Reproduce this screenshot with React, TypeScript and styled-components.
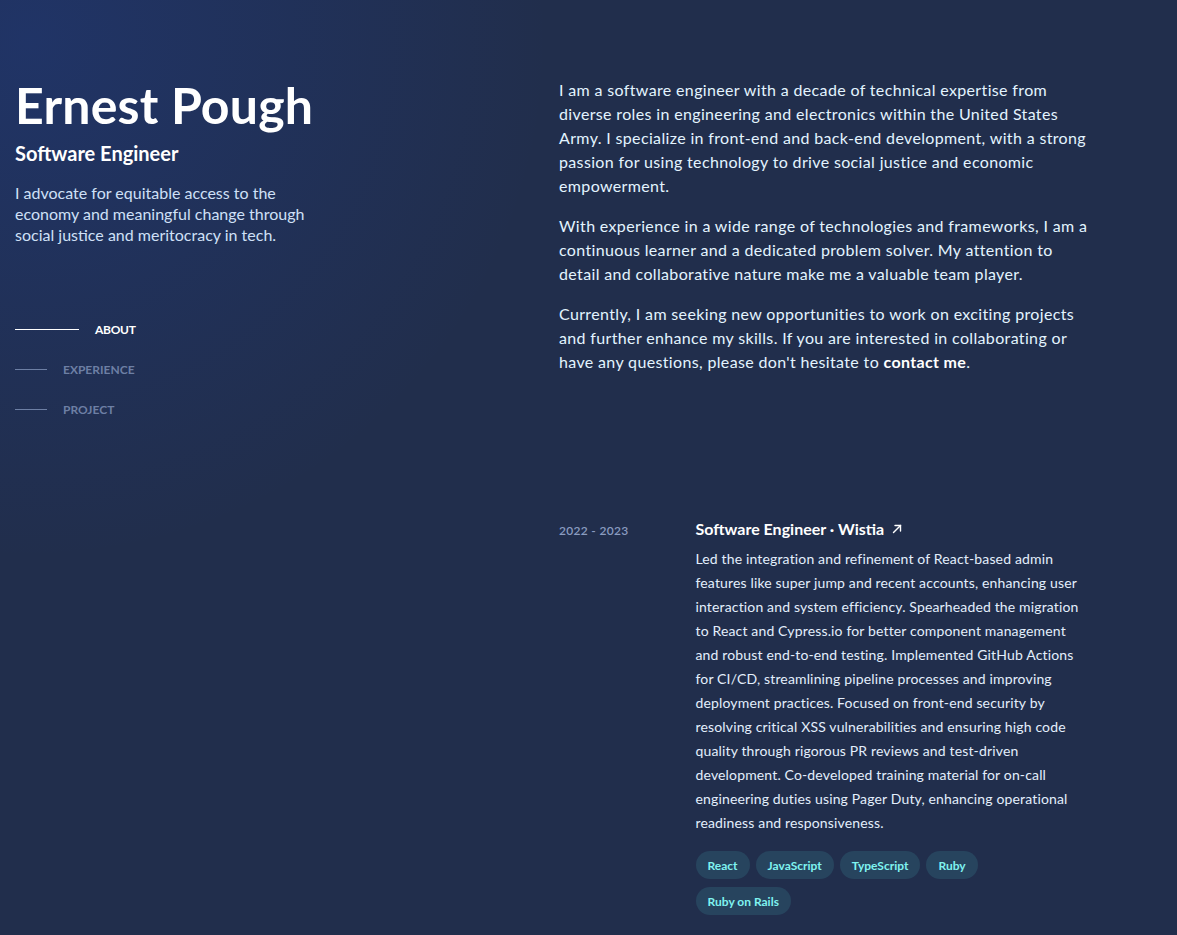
import React from "react";
import styled, { createGlobalStyle } from "styled-components";

const Global = createGlobalStyle`
  html, body { margin: 0; padding: 0; }
  body {
    background: #212e4c;
    font-family: "Lato", "Noto Sans", sans-serif;
    -webkit-font-smoothing: antialiased;
  }
`;

const Page = styled.div`
  min-height: 935px;
  background: radial-gradient(650px at 30px 40px, rgba(29, 78, 216, 0.19), transparent 80%), #212e4c;
  overflow: hidden;
`;

const Layout = styled.div`
  display: flex;
  padding-left: 15px;
`;

const Header = styled.header`
  width: 544px;
  flex-shrink: 0;
  padding-top: 76px;
`;

const Name = styled.h1`
  margin: 0;
  font-size: 50px;
  line-height: 58px;
  font-weight: 700;
  color: #ffffff;
  letter-spacing: 0.2px;
`;

const Role = styled.h2`
  margin: 5px 0 0;
  font-size: 20px;
  line-height: 28px;
  font-weight: 700;
  color: #ffffff;
`;

const Intro = styled.p`
  margin: 15px 0 0;
  width: 310px;
  font-size: 16px;
  line-height: 21px;
  color: #cfe0f7;
`;

const Nav = styled.nav`
  margin-top: 76px;
  display: flex;
  flex-direction: column;
  gap: 24px;
`;

const NavItem = styled.a<{ $active?: boolean }>`
  display: flex;
  align-items: center;
  gap: 16px;
  height: 16px;
  text-decoration: none;
  font-size: 12px;
  font-weight: 700;
  letter-spacing: ${(p) => (p.$active ? "-0.3px" : "0")};
  text-transform: uppercase;
  color: ${(p) => (p.$active ? "#ffffff" : "#6d7fa4")};
`;

const NavLine = styled.span<{ $active?: boolean }>`
  display: block;
  height: 1px;
  width: ${(p) => (p.$active ? "64px" : "32px")};
  background: ${(p) => (p.$active ? "#ffffff" : "#6d7fa4")};
`;

const Main = styled.main`
  width: 530px;
  flex-shrink: 0;
  padding-top: 78px;
`;

const About = styled.section`
  width: 538px;
  display: flex;
  flex-direction: column;
  gap: 16px;
`;

const Para = styled.p`
  margin: 0;
  font-size: 16px;
  line-height: 24px;
  letter-spacing: 0.35px;
  color: #e3f4ff;
`;

const Contact = styled.a`
  color: #ffffff;
  font-weight: 700;
  text-decoration: none;
`;

const Experience = styled.section`
  margin-top: 145px;
`;

const Job = styled.article`
  display: grid;
  grid-template-columns: repeat(8, 1fr);
  column-gap: 16px;
`;

const Dates = styled.div`
  grid-column: span 2;
  font-size: 12px;
  line-height: 16px;
  font-weight: 600;
  letter-spacing: 0.3px;
  color: #8a9cc0;
  margin-top: 4px;
`;

const JobBody = styled.div`
  grid-column: span 6;
`;

const JobTitle = styled.h3`
  margin: 0;
  display: flex;
  align-items: center;
  gap: 7px;
  font-size: 16px;
  line-height: 20px;
  font-weight: 700;
  color: #ffffff;
`;

const JobText = styled.p`
  margin: 8px 0 0;
  font-size: 14px;
  line-height: 24px;
  letter-spacing: 0.15px;
  color: #e3eefc;
`;

const Tags = styled.ul`
  list-style: none;
  margin: 16px 0 0;
  padding: 0;
  display: flex;
  flex-wrap: wrap;
  column-gap: 6px;
  row-gap: 8px;
  width: 300px;
`;

const Tag = styled.li`
  display: flex;
  align-items: center;
  height: 28px;
  padding: 0 12px;
  border-radius: 999px;
  background: #27445e;
  color: #7ff3f0;
  font-size: 12px;
  font-weight: 700;
`;

const Arrow = () => (
  <svg width="12" height="12" viewBox="0 0 12 12" fill="none" stroke="#ffffff" strokeWidth="1.4" strokeLinecap="round">
    <path d="M2.5 9.5L9.5 2.5" />
    <path d="M4 2.5H9.5V8" />
  </svg>
);

export default function App() {
  const tags = ["React", "JavaScript", "TypeScript", "Ruby", "Ruby on Rails"];
  return (
    <Page>
      <Global />
      <Layout>
        <Header>
          <Name>Ernest Pough</Name>
          <Role>Software Engineer</Role>
          <Intro>
            I advocate for equitable access to the economy and meaningful change through social justice and meritocracy in tech.
          </Intro>
          <Nav>
            <NavItem $active>
              <NavLine $active />
              About
            </NavItem>
            <NavItem>
              <NavLine />
              Experience
            </NavItem>
            <NavItem>
              <NavLine />
              Project
            </NavItem>
          </Nav>
        </Header>
        <Main>
          <About>
            <Para>
              I am a software engineer with a decade of technical expertise from diverse roles in engineering and electronics within the United States Army. I specialize in front-end and back-end development, with a strong passion for using technology to drive social justice and economic empowerment.
            </Para>
            <Para>
              With experience in a wide range of technologies and frameworks, I am a continuous learner and a dedicated problem solver. My attention to detail and collaborative nature make me a valuable team player.
            </Para>
            <Para>
              Currently, I am seeking new opportunities to work on exciting projects and further enhance my skills. If you are interested in collaborating or have any questions, please don't hesitate to <Contact>contact me</Contact>.
            </Para>
          </About>
          <Experience>
            <Job>
              <Dates>2022 - 2023</Dates>
              <JobBody>
                <JobTitle>
                  Software Engineer · Wistia <Arrow />
                </JobTitle>
                <JobText>
                  Led the integration and refinement of React-based admin features like super jump and recent accounts, enhancing user interaction and system efficiency. Spearheaded the migration to React and Cypress.io for better component management and robust end-to-end testing. Implemented GitHub Actions for CI/CD, streamlining pipeline processes and improving deployment practices. Focused on front-end security by resolving critical XSS vulnerabilities and ensuring high code quality through rigorous PR reviews and test-driven development. Co-developed training material for on-call engineering duties using Pager Duty, enhancing operational readiness and responsiveness.
                </JobText>
                <Tags>
                  {tags.map((t) => (
                    <Tag key={t}>{t}</Tag>
                  ))}
                </Tags>
              </JobBody>
            </Job>
          </Experience>
        </Main>
      </Layout>
    </Page>
  );
}
